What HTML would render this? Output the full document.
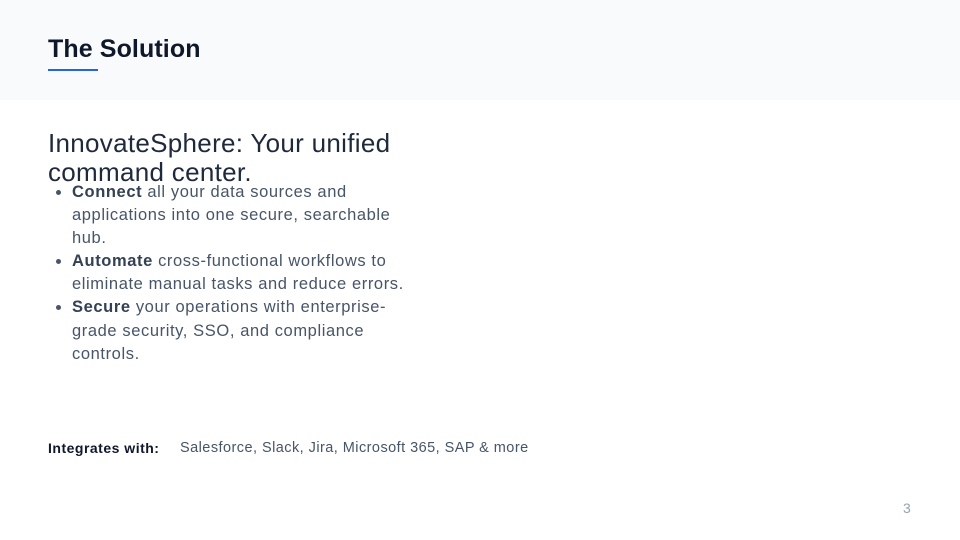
<!DOCTYPE html>
<html><head><style>
body{margin:0;width:960px;height:540px;background:#fff;font-family:"Liberation Sans",sans-serif;position:relative;overflow:hidden}
.hdr{position:absolute;left:0;top:0;width:960px;height:100px;background:#f8fafc}
.hdr h1{position:absolute;left:48px;top:34px;margin:0;font-size:25px;font-weight:bold;color:#0f172a;line-height:30px;letter-spacing:0.1px}
.hdr .u{position:absolute;left:48px;top:69px;width:50px;height:2px;background:#2563eb}
h2{position:absolute;left:48px;top:129px;margin:0;font-size:26px;font-weight:normal;color:#1e293b;line-height:29px;width:400px;letter-spacing:0.3px}
ul{position:absolute;left:48px;top:181px;margin:0;padding:0 0 0 24px;width:340px;font-size:16.5px;line-height:23.1px;color:#475569;letter-spacing:0.6px}
li b{color:#334155}
.int{position:absolute;left:48px;top:440px;font-size:14px;color:#0f172a;font-weight:bold;letter-spacing:0.5px}
.intv{position:absolute;left:180px;top:440px;font-size:14.5px;color:#475569;letter-spacing:0.45px}
.pg{position:absolute;left:903px;top:500px;font-size:14px;color:#94a3b8}
</style></head><body>
<div class="hdr"><h1>The Solution</h1><div class="u"></div></div>
<h2>InnovateSphere: Your unified command center.</h2>
<ul>
<li><b>Connect</b> all your data sources and applications into one secure, searchable hub.</li>
<li><b>Automate</b> cross-functional workflows to eliminate manual tasks and reduce errors.</li>
<li><b>Secure</b> your operations with enterprise-grade security, SSO, and compliance controls.</li>
</ul>
<div class="int">Integrates with:</div>
<div class="intv">Salesforce, Slack, Jira, Microsoft 365, SAP &amp; more</div>
<div class="pg">3</div>
</body></html>
